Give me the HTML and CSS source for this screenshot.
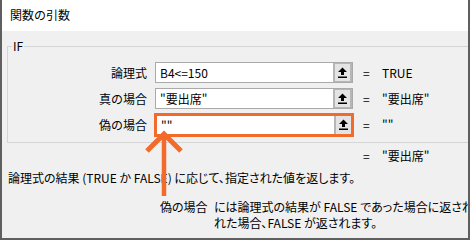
FILE: index.html
```html
<!DOCTYPE html>
<html lang="ja">
<head>
    <meta charset="UTF-8">
    <title>関数の引数</title>
    <link rel="stylesheet" href="styles.css">
</head>
<body>

    <div class="dialog">
        <div class="titlebar">関数の引数</div>

        <div class="body">
            <fieldset class="args">
                <legend>IF</legend>

                <div class="arg-row">
                    <span class="arg-label">論理式</span>
                    <div class="ref-input">
                        <span class="ref-text">B4&lt;=150</span>
                        <span class="ref-btn"><svg width="11" height="11" viewBox="0 0 11 11"><path d="M5.5 0.5 L10 5 H7 V8 H4 V5 H1 Z" fill="#000"/><rect x="1" y="9.5" width="9" height="1.5" fill="#000"/></svg></span>
                    </div>
                    <span class="eq">=</span>
                    <span class="arg-value">TRUE</span>
                </div>

                <div class="arg-row">
                    <span class="arg-label">真の場合</span>
                    <div class="ref-input">
                        <span class="ref-text">"要出席"</span>
                        <span class="ref-btn"><svg width="11" height="11" viewBox="0 0 11 11"><path d="M5.5 0.5 L10 5 H7 V8 H4 V5 H1 Z" fill="#000"/><rect x="1" y="9.5" width="9" height="1.5" fill="#000"/></svg></span>
                    </div>
                    <span class="eq">=</span>
                    <span class="arg-value">"要出席"</span>
                </div>

                <div class="arg-row">
                    <span class="arg-label">偽の場合</span>
                    <div class="ref-input highlight">
                        <span class="ref-text">""</span>
                        <span class="ref-btn"><svg width="11" height="11" viewBox="0 0 11 11"><path d="M5.5 0.5 L10 5 H7 V8 H4 V5 H1 Z" fill="#000"/><rect x="1" y="9.5" width="9" height="1.5" fill="#000"/></svg></span>
                    </div>
                    <span class="eq">=</span>
                    <span class="arg-value">""</span>
                </div>
            </fieldset>

            <div class="total">
                <span class="eq">=</span>
                <span class="arg-value">"要出席"</span>
            </div>

            <p class="func-desc">論理式の結果 (TRUE か FALSE) に応じて、指定された値を返します。</p>

            <div class="arg-desc">
                <span class="arg-name">偽の場合</span>
                <span class="arg-text">には論理式の結果が FALSE であった場合に返される値を指定します。省略さ<br>れた場合、FALSE が返されます。</span>
            </div>
        </div>

        <!-- callout arrow -->
        <svg class="callout" width="40" height="72" viewBox="0 0 40 72">
            <polyline points="2,21 19,4 36,21" fill="none" stroke="#f26b2b" stroke-width="5"/>
            <line x1="19" y1="6" x2="19" y2="66" stroke="#f26b2b" stroke-width="4.5"/>
        </svg>
    </div>

</body>
</html>
```

FILE: styles.css
```css
body {
    margin: 0;
    font-family: "Noto Sans CJK JP", "Noto Sans", sans-serif;
    font-size: 12px;
    color: #000;
    background: #f0f0f0;
}
.dialog {
    position: relative;
    width: 470px;
    height: 240px;
    box-sizing: border-box;
    border: 2px solid #5f5f5f;
    border-top: none;
    background: #f0f0f0;
    overflow: hidden;
}
.titlebar {
    height: 31px;
    line-height: 30px;
    padding-left: 8px;
    background: #fff;
}
.body {
    width: 560px;
}
.args {
    margin: 8px 0 0 5px;
    padding: 9px 0 7px 0;
    border: 1px solid #d5d5d5;
    width: 540px;
}
.args legend {
    margin-left: 4px;
    padding: 0 1px;
    line-height: 14px;
}
.arg-row {
    display: flex;
    align-items: center;
    height: 21px;
    margin-bottom: 5px;
}
.arg-row:last-child {
    margin-bottom: 0;
}
.arg-label {
    width: 139px;
    text-align: right;
    margin-right: 8px;
}
.ref-input {
    display: flex;
    width: 198px;
    height: 21px;
    box-sizing: border-box;
    border: 1px solid #aaa;
    background: #fff;
}
.ref-input.highlight {
    border: 3px solid #f26b2b;
    height: 24px;
    margin-left: -1px;
    margin-right: -1px;
    width: 200px;
}
.ref-text {
    flex: 1;
    padding-left: 4px;
    line-height: 19px;
    white-space: nowrap;
}
.ref-btn {
    display: flex;
    align-items: center;
    justify-content: center;
    width: 15px;
    border: 2px solid #b6b6b6;
    border-top-width: 1px;
    border-bottom-width: 1px;
    background: #e4e4e4;
}
.highlight .ref-btn {
    border-top: none;
    border-bottom: none;
    border-right: none;
}
.eq {
    width: 19px;
    margin-left: 10px;
}
.arg-value {
    white-space: nowrap;
}
.total {
    display: flex;
    padding-left: 351px;
    margin-top: 5px;
    height: 16px;
    line-height: 16px;
}
.func-desc {
    margin: 6px 0 0 6px;
    line-height: 16px;
    font-feature-settings: "palt";
}
.arg-desc {
    display: flex;
    margin-top: 13px;
    padding-left: 158px;
    line-height: 16px;
    white-space: nowrap;
    font-feature-settings: "palt";
}
.arg-name {
    flex: none;
    width: 54px;
}
.callout {
    position: absolute;
    left: 143px;
    top: 130px;
}
```
